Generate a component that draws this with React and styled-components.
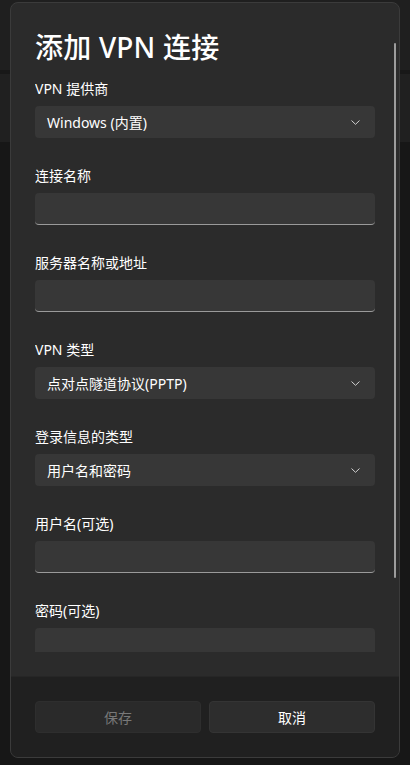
import React from 'react';
import styled, { createGlobalStyle } from 'styled-components';

const GlobalStyle = createGlobalStyle`
  html, body {
    margin: 0;
    padding: 0;
  }
  body {
    width: 410px;
    height: 765px;
    overflow: hidden;
    background: linear-gradient(to bottom, #1f1f1f 0 70px, #181818 70px 74px, #202020 74px 142px, #171717 142px);
    font-family: "Noto Sans", "Noto Sans CJK SC", sans-serif;
    color: #ffffff;
  }
`;

const Dialog = styled.div`
  position: relative;
  box-sizing: border-box;
  margin: 2px 0 0 10px;
  width: 390px;
  height: 756px;
  display: flex;
  flex-direction: column;
  background: #2b2b2b;
  border: 1px solid #3b3b3b;
  border-radius: 8px;
  overflow: hidden;
`;

const Body = styled.div`
  flex: 1;
  min-height: 0;
  padding: 24px;
  display: flex;
  flex-direction: column;
`;

const Scroll = styled.div`
  flex: 1;
  min-height: 0;
  overflow: hidden;
`;

const ScrollThumb = styled.div`
  position: absolute;
  right: 3px;
  top: 40px;
  width: 2px;
  height: 535px;
  border-radius: 1px;
  background: #9c9c9c;
`;

const Title = styled.h1`
  margin: 0 0 12px;
  font-size: 28px;
  line-height: 40px;
  font-weight: 500;
  letter-spacing: 0.2px;
`;

const Field = styled.div`
  display: flex;
  flex-direction: column;
  gap: 7px;
  margin-bottom: 28px;
`;

const Label = styled.label`
  font-size: 14px;
  line-height: 20px;
  color: #ffffff;
`;

const Select = styled.div`
  box-sizing: border-box;
  height: 32px;
  padding: 0 15px 0 12px;
  display: flex;
  align-items: center;
  justify-content: space-between;
  background: #373737;
  border-radius: 4px;
  font-size: 14px;
  color: #ffffff;
`;

const TextBox = styled.div`
  box-sizing: border-box;
  height: 32px;
  background: #373737;
  border-radius: 4px;
  border-bottom: 1px solid #9a9a9a;
`;

const Footer = styled.div`
  display: grid;
  grid-template-columns: 1fr 1fr;
  gap: 8px;
  padding: 24px;
  background: #202020;
  border-top: 1px solid #262626;
`;

const Button = styled.button`
  height: 32px;
  border-radius: 4px;
  font-family: inherit;
  font-size: 14px;
  background: ${p => (p.disabled ? '#2a2a2a' : '#2d2d2d')};
  border: 1px solid ${p => (p.disabled ? '#2e2e2e' : '#343434')};
  color: ${p => (p.disabled ? '#787878' : '#ffffff')};
`;

const Chevron = () => (
  <svg width="9" height="5" viewBox="0 0 9 5" fill="none">
    <path d="M0.8 0.8l3.7 3.5 3.7-3.5" stroke="#d0d0d0" strokeWidth="1" strokeLinecap="round" strokeLinejoin="round" />
  </svg>
);

const fields = [
  { label: 'VPN 提供商', value: 'Windows (内置)' },
  { label: '连接名称' },
  { label: '服务器名称或地址' },
  { label: 'VPN 类型', value: '点对点隧道协议(PPTP)' },
  { label: '登录信息的类型', value: '用户名和密码' },
  { label: '用户名(可选)' },
  { label: '密码(可选)' },
];

const App = () => {
  return (
    <>
      <GlobalStyle />
      <Dialog>
        <Body>
          <Scroll>
            <Title>添加 VPN 连接</Title>
            {fields.map(f => (
              <Field key={f.label}>
                <Label>{f.label}</Label>
                {f.value ? (
                  <Select>
                    <span>{f.value}</span>
                    <Chevron />
                  </Select>
                ) : (
                  <TextBox />
                )}
              </Field>
            ))}
          </Scroll>
        </Body>
        <ScrollThumb />
        <Footer>
          <Button disabled>保存</Button>
          <Button>取消</Button>
        </Footer>
      </Dialog>
    </>
  );
};

export default App;
